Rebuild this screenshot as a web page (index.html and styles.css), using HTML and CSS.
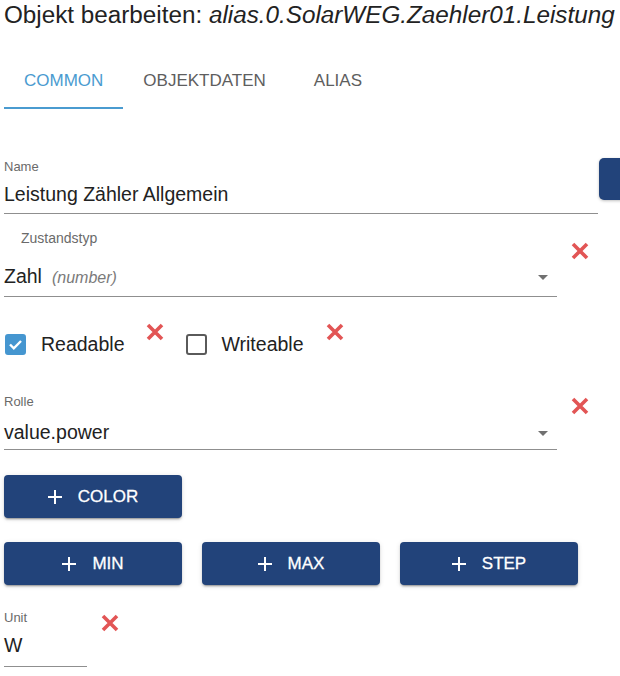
FILE: index.html
```html
<!DOCTYPE html>
<html lang="de">
<head>
<meta charset="utf-8">
<title>Objekt bearbeiten</title>
<link rel="stylesheet" href="styles.css">
</head>
<body>
<div class="page">
  <h1 class="title">Objekt bearbeiten: <i>alias.0.SolarWEG.Zaehler01.Leistung</i></h1>

  <div class="tabs">
    <div class="tab active">COMMON</div>
    <div class="tab">OBJEKTDATEN</div>
    <div class="tab tab-alias">ALIAS</div>
  </div>

  <div class="row name-row">
    <div class="field name-field">
      <div class="label">Name</div>
      <div class="value">Leistung Zähler Allgemein</div>
    </div>
    <div class="side-btn"></div>
  </div>

  <div class="row type-row">
    <div class="field select-field type-field">
      <div class="label label-indent">Zustandstyp</div>
      <div class="value select-value"><span class="sel-text">Zahl<em class="hint">(number)</em></span><span class="arrow"></span></div>
    </div>
    <svg class="xicon x-type" viewBox="0 0 20 20"><path d="M3 3L17 17M17 3L3 17"/></svg>
  </div>

  <div class="row check-row">
    <span class="checkbox checked"><svg viewBox="0 0 21 21"><path d="M5 10.5l3.8 3.8L16 7"/></svg></span>
    <span class="check-label">Readable</span>
    <svg class="xicon x-check" viewBox="0 0 20 20"><path d="M3 3L17 17M17 3L3 17"/></svg>
    <span class="checkbox"></span>
    <span class="check-label second">Writeable</span>
    <svg class="xicon x-check" viewBox="0 0 20 20"><path d="M3 3L17 17M17 3L3 17"/></svg>
  </div>

  <div class="row role-row">
    <div class="field select-field role-field">
      <div class="label">Rolle</div>
      <div class="value select-value"><span class="sel-text">value.power</span><span class="arrow"></span></div>
    </div>
    <svg class="xicon x-role" viewBox="0 0 20 20"><path d="M3 3L17 17M17 3L3 17"/></svg>
  </div>

  <div class="btn-row first">
    <button class="btn"><svg class="plus" viewBox="0 0 14 14"><path d="M7 0V14M0 7H14"/></svg>COLOR</button>
  </div>

  <div class="btn-row">
    <button class="btn"><svg class="plus" viewBox="0 0 14 14"><path d="M7 0V14M0 7H14"/></svg>MIN</button>
    <button class="btn"><svg class="plus" viewBox="0 0 14 14"><path d="M7 0V14M0 7H14"/></svg>MAX</button>
    <button class="btn"><svg class="plus" viewBox="0 0 14 14"><path d="M7 0V14M0 7H14"/></svg>STEP</button>
  </div>

  <div class="row unit-row">
    <div class="field unit-field">
      <div class="label">Unit</div>
      <div class="value">W</div>
    </div>
    <svg class="xicon x-unit" viewBox="0 0 20 20"><path d="M3 3L17 17M17 3L3 17"/></svg>
  </div>
</div>
</body>
</html>
```

FILE: styles.css
```css
html, body {
  margin: 0;
  padding: 0;
  background: #ffffff;
  overflow: hidden;
}

.page {
  width: 620px;
  height: 676px;
  overflow: hidden;
  padding: 1px 0 0 4px;
  box-sizing: border-box;
  font-family: "Liberation Sans", Arial, sans-serif;
  color: #222222;
}

.title {
  margin: 0;
  font-size: 24.25px;
  line-height: 28px;
  font-weight: normal;
  white-space: nowrap;
  color: #222222;
}

.title i {
  font-style: italic;
}

.tabs {
  display: flex;
  margin-top: 30px;
}

.tab {
  padding: 12px 20px 16px;
  font-size: 17px;
  line-height: 20px;
  color: #5e5e5e;
  border-bottom: 2px solid transparent;
}

.tab.active {
  color: #4a9bd0;
  border-bottom-color: #4a9bd0;
}

.tab-alias {
  padding-left: 28px;
  padding-right: 28px;
}

.row {
  display: flex;
  align-items: flex-start;
}

.name-row {
  margin-top: 50px;
}

.field {
  display: flex;
  flex-direction: column;
  border-bottom: 1px solid #8f8f8f;
  flex-shrink: 0;
}

.label {
  font-size: 13px;
  line-height: 16px;
  color: #6a6a6a;
}

.label-indent {
  padding-left: 17px;
  font-size: 14px;
}

.value {
  font-size: 19.5px;
  line-height: 24px;
  height: 24px;
  color: #222222;
}

.name-field {
  width: 594px;
}

.name-field .value {
  margin-top: 7px;
  padding-bottom: 7px;
}

.side-btn {
  flex-shrink: 0;
  width: 40px;
  height: 42px;
  margin-left: 1px;
  margin-top: -1px;
  background: #22437a;
  border-radius: 5px;
  box-shadow: 0 1px 3px rgba(0, 0, 0, 0.25);
}

.type-row {
  margin-top: 16px;
}

.select-field {
  width: 553px;
}

.select-value {
  display: flex;
  justify-content: space-between;
  align-items: center;
}

.sel-text {
  line-height: 24px;
  height: 24px;
}

.type-field .value {
  margin-top: 18px;
  padding-bottom: 8px;
}

.hint {
  font-size: 16px;
  line-height: 1;
  font-style: italic;
  color: #7a7a7a;
  margin-left: 10px;
}

.arrow {
  width: 0;
  height: 0;
  margin-right: 9px;
  margin-top: 2px;
  border-left: 5px solid transparent;
  border-right: 5px solid transparent;
  border-top: 5px solid #707070;
}

.xicon {
  flex-shrink: 0;
  width: 20px;
  height: 20px;
  fill: none;
  stroke: #e25555;
  stroke-width: 3.6;
  stroke-linecap: butt;
}

.x-type {
  margin-left: 13px;
  margin-top: 11px;
}

.check-row {
  margin-top: 25px;
  height: 44px;
  align-items: center;
}

.checkbox {
  width: 21px;
  height: 21px;
  box-sizing: border-box;
  border: 2px solid #5a5a5a;
  border-radius: 3px;
  margin-left: 1px;
  display: flex;
  flex-shrink: 0;
}

.checkbox.checked {
  background: #4596d0;
  border-color: #4596d0;
}

.checkbox svg {
  width: 21px;
  height: 21px;
  margin: -2px;
  fill: none;
  stroke: #ffffff;
  stroke-width: 2.4;
}

.check-label {
  font-size: 19.5px;
  line-height: 24px;
  margin-left: 15px;
  color: #222222;
}

.check-label.second {
  margin-left: 14px;
}

.x-check {
  align-self: flex-start;
  margin-top: 0;
  margin-left: 21px;
  margin-right: 20px;
}

.role-row {
  margin-top: 28px;
}

.role-field .value {
  margin-top: 10px;
  padding-bottom: 5px;
}

.x-role {
  margin-left: 13px;
  margin-top: 2px;
}

.btn-row {
  display: flex;
  gap: 20px;
  margin-top: 24px;
}

.btn-row.first {
  margin-top: 25px;
}

.btn {
  width: 178px;
  height: 43px;
  border: none;
  border-radius: 4px;
  background: #22437a;
  color: #ffffff;
  font-family: "Liberation Sans", Arial, sans-serif;
  font-size: 17px;
  -webkit-text-stroke: 0.3px #ffffff;
  display: flex;
  align-items: center;
  justify-content: center;
  gap: 16px;
  padding: 0;
  box-shadow: 0 3px 1px -2px rgba(0, 0, 0, 0.2), 0 2px 2px 0 rgba(0, 0, 0, 0.14), 0 1px 5px 0 rgba(0, 0, 0, 0.12);
}

.plus {
  width: 14px;
  height: 14px;
  stroke: #ffffff;
  stroke-width: 2;
  fill: none;
}

.unit-row {
  margin-top: 25px;
}

.unit-field {
  width: 83px;
}

.unit-field .value {
  margin-top: 7px;
  padding-bottom: 9px;
}

.x-unit {
  margin-left: 13px;
  margin-top: 3px;
}
```
